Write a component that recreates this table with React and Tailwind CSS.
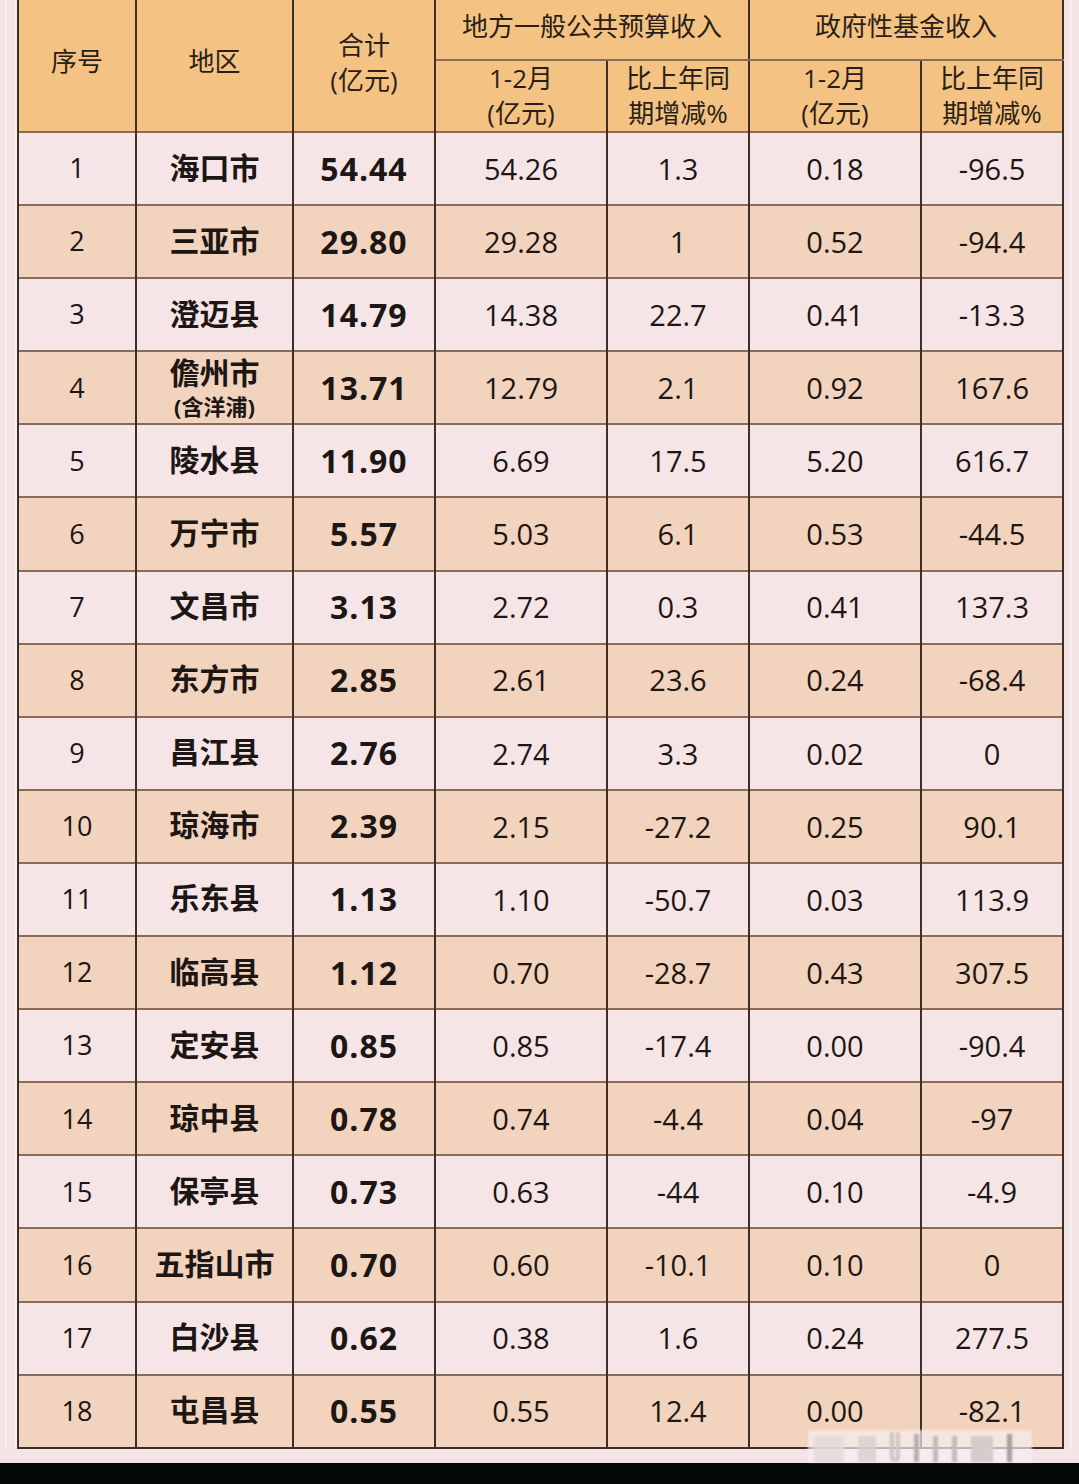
import React from "react";

const rows = [
  ["1", "海口市", "54.44", "54.26", "1.3", "0.18", "-96.5"],
  ["2", "三亚市", "29.80", "29.28", "1", "0.52", "-94.4"],
  ["3", "澄迈县", "14.79", "14.38", "22.7", "0.41", "-13.3"],
  ["4", "儋州市", "13.71", "12.79", "2.1", "0.92", "167.6"],
  ["5", "陵水县", "11.90", "6.69", "17.5", "5.20", "616.7"],
  ["6", "万宁市", "5.57", "5.03", "6.1", "0.53", "-44.5"],
  ["7", "文昌市", "3.13", "2.72", "0.3", "0.41", "137.3"],
  ["8", "东方市", "2.85", "2.61", "23.6", "0.24", "-68.4"],
  ["9", "昌江县", "2.76", "2.74", "3.3", "0.02", "0"],
  ["10", "琼海市", "2.39", "2.15", "-27.2", "0.25", "90.1"],
  ["11", "乐东县", "1.13", "1.10", "-50.7", "0.03", "113.9"],
  ["12", "临高县", "1.12", "0.70", "-28.7", "0.43", "307.5"],
  ["13", "定安县", "0.85", "0.85", "-17.4", "0.00", "-90.4"],
  ["14", "琼中县", "0.78", "0.74", "-4.4", "0.04", "-97"],
  ["15", "保亭县", "0.73", "0.63", "-44", "0.10", "-4.9"],
  ["16", "五指山市", "0.70", "0.60", "-10.1", "0.10", "0"],
  ["17", "白沙县", "0.62", "0.38", "1.6", "0.24", "277.5"],
  ["18", "屯昌县", "0.55", "0.55", "12.4", "0.00", "-82.1"],
];

const font = { fontFamily: '"Open Sans", "Noto Sans CJK SC", sans-serif' };

export default function App() {
  return (
    <div
      className="relative w-[1079px] h-[1484px] bg-[#f5e4e6] overflow-hidden flex flex-col"
      style={font}
    >
      <div className="flex">
        <div className="w-[17px] shrink-0 flex">
          <div className="w-[5px]" />
          <div className="w-[2px] bg-[#f9eef0]" />
          <div className="w-[8px]" />
          <div className="w-[2px] bg-[#f9eef0]" />
        </div>
        <table className="table-fixed border-collapse w-[1045px] text-[#1c1614]">
          <colgroup>
            <col className="w-[118px]" />
            <col className="w-[157px]" />
            <col className="w-[142px]" />
            <col className="w-[172px]" />
            <col className="w-[142px]" />
            <col className="w-[172px]" />
            <col className="w-[142px]" />
          </colgroup>
          <thead className="bg-[#f4c283] text-[26px] leading-[35px] font-normal text-[#2a1f18]">
            <tr className="h-[60px]">
              <th rowSpan={2} className="font-normal border-l-2 border-r-2 border-[#3d2e26] pb-[8px]">序号</th>
              <th rowSpan={2} className="font-normal border-r-2 border-[#3d2e26] pb-[8px]">地区</th>
              <th rowSpan={2} className="font-normal border-r-2 border-[#3d2e26] pb-[6px]">
                <div>合计</div>
                <div>(亿元)</div>
              </th>
              <th colSpan={2} className="font-normal border-r-2 border-b-2 border-[#3d2e26] border-b-[#8a6a58] pb-[6px]">
                地方一般公共预算收入
              </th>
              <th colSpan={2} className="font-normal border-r-2 border-b-2 border-[#3d2e26] border-b-[#8a6a58] pb-[6px]">
                政府性基金收入
              </th>
            </tr>
            <tr className="h-[68px]">
              <th className="font-normal border-r-2 border-[#3d2e26]">
                <div>1-2月</div>
                <div>(亿元)</div>
              </th>
              <th className="font-normal border-r-2 border-[#3d2e26]">
                <div>比上年同</div>
                <div>期增减%</div>
              </th>
              <th className="font-normal border-r-2 border-[#3d2e26]">
                <div>1-2月</div>
                <div>(亿元)</div>
              </th>
              <th className="font-normal border-r-2 border-[#3d2e26]">
                <div>比上年同</div>
                <div>期增减%</div>
              </th>
            </tr>
          </thead>
          <tbody className="text-[29px]">
            {rows.map((r, i) => (
              <tr
                key={r[0]}
                className={`h-[73.1px] border-t-2 border-[#8a6a58] ${
                  i % 2 === 0 ? "bg-[#f6e5e7]" : "bg-[#f2d3bd]"
                } ${i === rows.length - 1 ? "border-b-2 border-b-[#3d2e26]" : ""}`}
              >
                <td className="text-center border-l-2 border-r-2 border-[#3d2e26] text-[27px]">{r[0]}</td>
                <td className="text-center border-r-2 border-[#3d2e26] font-bold text-[30px] leading-[34px]">
                  {r[0] === "4" ? (
                    <div className="flex flex-col items-center gap-[4px]">
                      <div className="leading-[32px]">{r[1]}</div>
                      <div className="text-[22px] leading-[26px]">(含洋浦)</div>
                    </div>
                  ) : (
                    <div className="pb-[2px]">{r[1]}</div>
                  )}
                </td>
                <td className="text-center border-r-2 border-[#3d2e26] font-bold text-[32px] tracking-[1px]">{r[2]}</td>
                <td className="text-center border-r-2 border-[#3d2e26]">{r[3]}</td>
                <td className="text-center border-r-2 border-[#3d2e26]">{r[4]}</td>
                <td className="text-center border-r-2 border-[#3d2e26]">{r[5]}</td>
                <td className="text-center border-r-2 border-[#3d2e26]">{r[6]}</td>
              </tr>
            ))}
          </tbody>
        </table>
        <div className="flex-1 flex">
          <div className="w-[6px]" />
          <div className="w-[2px] bg-[#f9eef0]" />
        </div>
      </div>
      <div className="flex-1" />
      <div className="h-[21px] bg-[#050808]" />

      {/* watermark */}
      <div className="absolute left-[808px] top-[1430px] w-[224px] h-[32px] flex items-end gap-[14px] px-[6px] bg-[#f7eef0]/70 blur-[1px]">
        <div className="w-[30px] h-[26px] bg-[#e4dada]/80" />
        <div className="w-[18px] h-[26px] bg-[#d8cfcf]/80" />
        <div className="w-[10px] h-[30px] rounded-b-full border-x-4 border-b-4 border-[#cfc5c5]" />
        <div className="w-[5px] h-[28px] bg-[#b8aeae]" />
        <div className="w-[5px] h-[26px] bg-[#c4baba]" />
        <div className="w-[5px] h-[26px] bg-[#c4baba]" />
        <div className="w-[22px] h-[26px] bg-[#d6cccc]" />
        <div className="w-[5px] h-[28px] bg-[#a89e9e]" />
      </div>
    </div>
  );
}
